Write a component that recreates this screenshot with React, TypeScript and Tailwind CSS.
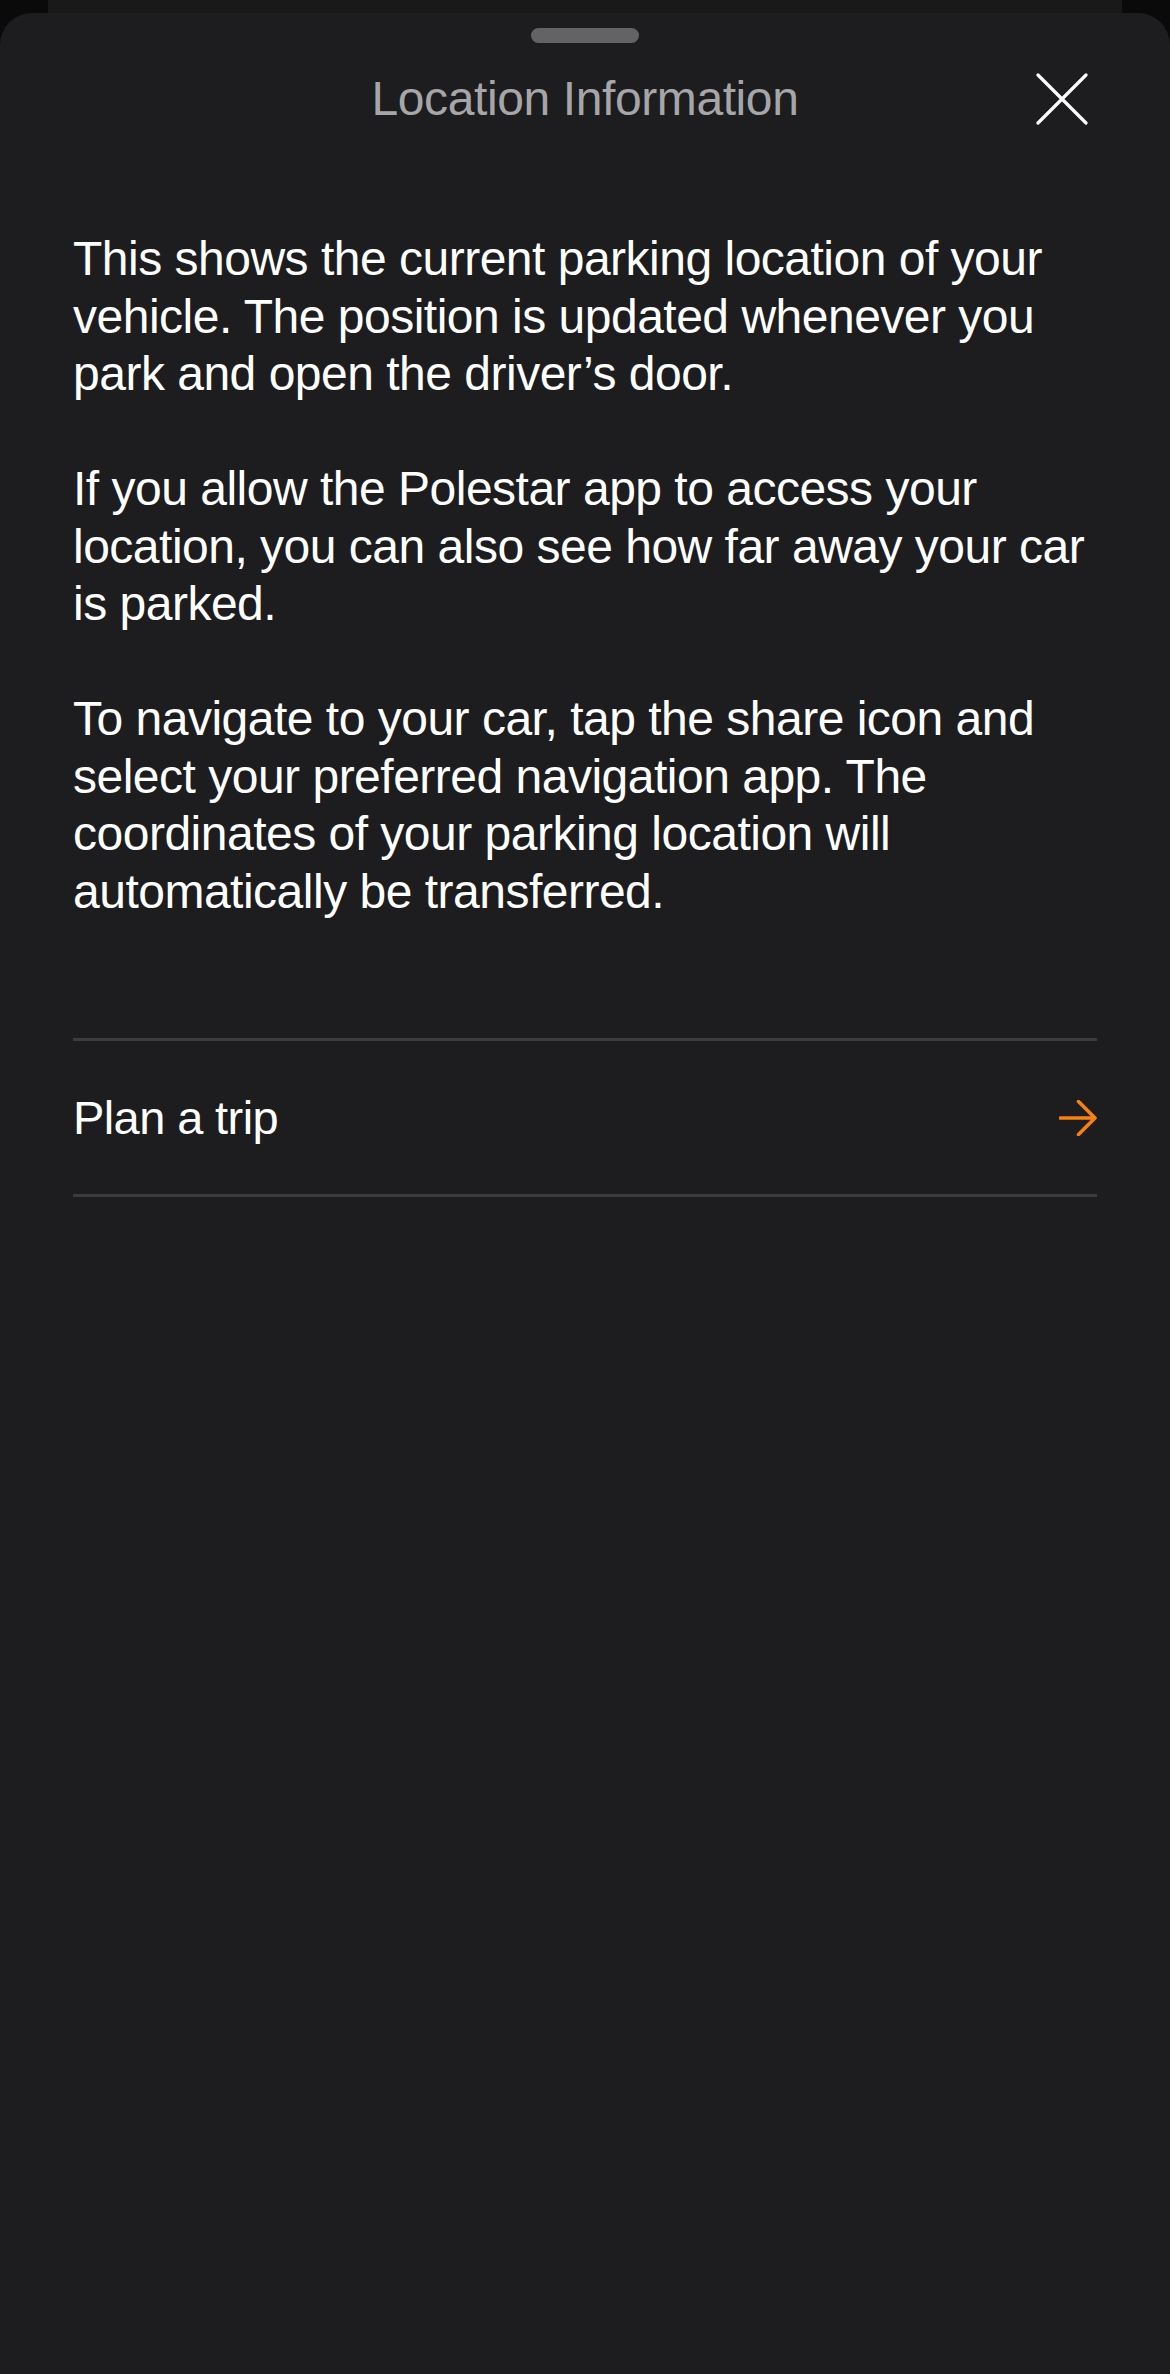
import React from "react";

const font = { fontFamily: '"Liberation Sans", Arial, sans-serif' };

export default function App() {
  return (
    <div className="relative w-[1170px] h-[2374px] bg-[#0a0a0a] overflow-hidden" style={font}>
      <div className="absolute left-[48px] right-[48px] top-0 h-[40px] rounded-b-[4px] bg-[#19191a]" />
      <div className="absolute left-0 right-0 top-[13px] bottom-0 rounded-t-[32px] bg-[#1d1d1f] flex flex-col">
        <div className="flex justify-center pt-[15px]">
          <div className="w-[108px] h-[15px] rounded-full bg-[#636365]" />
        </div>
        <div className="relative h-[57px] mt-[27px] flex items-center justify-center">
          <span className="text-[48px] leading-[57px] tracking-[-0.4px] text-[#a6a6a8]">Location Information</span>
          <svg className="absolute left-[1036px] top-[3px]" width="52" height="52" viewBox="0 0 52 52" fill="none">
            <path d="M2 2L50 50M50 2L2 50" stroke="#ffffff" strokeWidth="3.2" strokeLinecap="round" />
          </svg>
        </div>
        <div className="px-[73px] mt-[103px] text-[48px] leading-[57.5px] tracking-[-0.5px] text-white flex flex-col">
          <p>
            This shows the current parking location of your<br />
            vehicle. The position is updated whenever you<br />
            park and open the driver’s door.
          </p>
          <p className="mt-[57.5px]">
            If you allow the Polestar app to access your<br />
            location, you can also see how far away your car<br />
            is parked.
          </p>
          <p className="mt-[57.5px]">
            To navigate to your car, tap the share icon and<br />
            select your preferred navigation app. The<br />
            coordinates of your parking location will<br />
            automatically be transferred.
          </p>
        </div>
        <div className="mx-[73px] mt-[118px] border-t-[3px] border-b-[3px] border-[#3c3c3e]">
          <div className="h-[153px] flex items-center justify-between">
            <span className="text-[47px] leading-[57px] tracking-[-0.6px] text-white">Plan a trip</span>
            <svg width="38" height="36" viewBox="0 0 38 36" fill="none">
              <path d="M1.5 18H36M19.5 1.5L36 18L19.5 34.5" stroke="#f5820f" strokeWidth="3.6" strokeLinecap="round" strokeLinejoin="round" />
            </svg>
          </div>
        </div>
      </div>
    </div>
  );
}
